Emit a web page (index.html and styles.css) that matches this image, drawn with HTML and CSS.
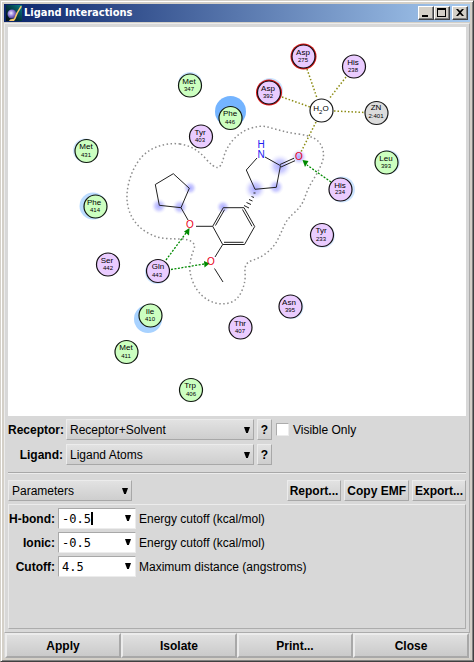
FILE: index.html
```html
<!DOCTYPE html>
<html lang="en">
<head>
<meta charset="utf-8">
<title>Ligand Interactions</title>
<link rel="stylesheet" href="styles.css">
</head>
<body>
<div class="window">
  <header class="titlebar">
    <svg class="app-icon" viewBox="0 0 16 16" aria-hidden="true">
      <defs>
        <linearGradient id="teal" x1="0" y1="1" x2="1" y2="0"><stop offset="0" stop-color="#020c10"/><stop offset=".45" stop-color="#04343c"/><stop offset="1" stop-color="#0a8088"/></linearGradient>
        <radialGradient id="orb" cx=".4" cy=".4" r=".6"><stop offset="0" stop-color="#f4f0ff"/><stop offset=".5" stop-color="#9a86dc"/><stop offset="1" stop-color="#4a3a96"/></radialGradient>
      </defs>
      <rect width="16" height="16" fill="url(#teal)"/>
      <circle cx="6" cy="9" r="4.5" fill="url(#orb)"/>
      <path d="M14.500 1L16 1.500L12 8L9.500 14L8 16H3L4 14.500L8 13.500L10 8.500Z" fill="#f8c86c"/>
    </svg>
    <h1 class="title">Ligand Interactions</h1>
    <div class="window-buttons">
      <button class="win-btn" aria-label="Minimize"><svg viewBox="0 0 12 10"><path d="M2 7h6v2H2z"/></svg></button>
      <button class="win-btn" aria-label="Maximize"><svg viewBox="0 0 12 10"><path fill-rule="evenodd" d="M1 0h9v9H1zM2 2v6h7V2z"/></svg></button>
      <button class="win-btn win-close" aria-label="Close window"><svg viewBox="0 0 12 10"><path d="M2 1h2l2 2 2-2h2L7 4.500 10 8H8L6 6 4 8H2l3-3.500z"/></svg></button>
    </div>
  </header>

  <main class="client">
    <svg class="diagram" viewBox="8 27 458 389" role="img" aria-label="Ligand interaction diagram">
      <defs>
        <radialGradient id="glow"><stop offset="0" stop-color="#a8a8ff"/><stop offset=".5" stop-color="#c8c8ff" stop-opacity=".85"/><stop offset="1" stop-color="#f0f0ff" stop-opacity="0"/></radialGradient>
      </defs>
      <g fill="url(#glow)">
        <circle cx="255" cy="189" r="11"/><circle cx="280" cy="166" r="12"/><circle cx="276" cy="187" r="8"/>
        <circle cx="299" cy="157" r="8"/><circle cx="190" cy="188" r="7"/><circle cx="180" cy="207" r="8"/>
        <circle cx="159" cy="206" r="8"/><circle cx="223" cy="207" r="7"/>
      </g>
      <path class="contour" d="M180 144Q173 143 165 144.500Q157 146 149.500 150.500Q142 155 136.500 164Q131 173 128.500 184Q126 195 127.500 204Q129 213 134 220.500Q139 228 148 233Q157 238 166 238.500Q175 239 181.500 239Q188 239 192 242Q196 245 193.500 250.500Q191 256 190 264Q189 272 192.500 281Q196 290 202 295.500Q208 301 215.500 303Q223 305 230.500 302.500Q238 300 242 290.500Q246 281 245 272Q244 263 252 260.500Q260 258 267 252.500Q274 247 277.500 240Q281 233 284 226Q287 219 294.500 212.500Q302 206 305 197Q308 188 313 180Q318 172 321.500 164Q325 156 322.500 148.500Q320 141 313.500 138Q307 135 298.500 134Q290 133 282.500 131Q275 129 267.500 127Q260 125 250 128.500Q240 132 233 140Q226 148 223.500 158Q221 168 217 167.500Q213 167 206.500 159.500Q200 152 193.500 148.500Q187 145 180 144Z"/>
      <g class="bond">
        <path d="M173.300 173.700L189.300 188.300L181 207.700L159.300 205.300L155.300 184.500Z"/>
        <path d="M181 207.700L188 220M196 226.300H212.700M222.700 244.500L215 257M214.500 268.500L223 282"/>
        <path d="M212.700 226.300L223.300 207.700H244L254.700 226.500L244.500 244.500H222.700Z"/>
        <path d="M215.500 225.500L224.500 209.700M242.500 209.500L252 226.300M243.500 242.300H224"/>
        <path d="M257 158L246.300 170L255 189.300L276.300 187.300L280.500 165.700L265 157"/>
        <path d="M280 164.500L294 158.200M281 167L295 160.700"/>
        <path d="M253.500 193h2M251.500 196.500l2.500 1M249 199.500l3.500 1.500M246.500 202.500l4.500 2M244 205.500l5 2.500"/>
      </g>
      <g class="water-link">
        <path d="M307 69L317 98M346 77L329 99M282 97L310 107M334 111L365 112.500M316 122L301 152"/>
      </g>
      <g class="hbond">
        <path d="M331 182L307 165M166 260L186 233M171 269.500L204 264"/>
      </g>
      <g fill="#008a00">
        <path d="M302.500 160L308.500 161L305 167Z"/><path d="M189.500 228L189 235.500L184 231.500Z"/><path d="M209.500 263.500L204.500 267.500L204 261Z"/>
      </g>
      <g class="atom">
        <text class="nitrogen" x="261" y="148">H</text><text class="nitrogen" x="261" y="158">N</text>
        <text class="oxygen" x="299" y="160">O</text><text class="oxygen" x="190" y="228">O</text><text class="oxygen" x="211" y="265">O</text>
      </g>
      <g>
        <circle cx="190" cy="84" r="12" fill="#c8e2ff"/><circle cx="230.500" cy="111.500" r="15.500" fill="#74b4ff"/>
        <circle cx="85" cy="150.500" r="12" fill="#d0e6ff"/><circle cx="93" cy="206" r="13.500" fill="#bcdcff"/>
        <circle cx="148" cy="319" r="14" fill="#a8d2ff"/><circle cx="270" cy="91" r="13" fill="#cce4ff"/>
        <circle cx="388" cy="162" r="12" fill="#d4e8ff"/><circle cx="342" cy="189.500" r="13" fill="#cce4ff"/>
        <circle cx="323" cy="236" r="12" fill="#dcecff"/><circle cx="291.500" cy="307" r="12" fill="#d4e8ff"/>
        <circle cx="157" cy="272" r="12" fill="#cce4ff"/>
      </g>
      <g class="greasy">
        <circle cx="190" cy="85.500" r="11.500"/><circle cx="230.500" cy="118" r="11.500"/><circle cx="86.500" cy="151" r="11.500"/>
        <circle cx="95.500" cy="206.500" r="11.500"/><circle cx="386.500" cy="162.500" r="11.500"/><circle cx="150.500" cy="315.500" r="11.500"/>
        <circle cx="126.500" cy="352" r="11.500"/><circle cx="191" cy="390" r="11.500"/>
      </g>
      <g class="polar">
        <circle cx="201" cy="136.500" r="11.500"/><circle cx="354" cy="66.500" r="11.500"/><circle cx="340.500" cy="189.500" r="11.500"/>
        <circle cx="322" cy="235" r="11.500"/><circle cx="290.500" cy="306.500" r="11.500"/><circle cx="158" cy="271" r="11.500"/>
        <circle cx="108" cy="264.500" r="11.500"/><circle cx="240.500" cy="327.500" r="11.500"/>
      </g>
      <g fill="#d81414"><circle cx="303.500" cy="56.500" r="13"/><circle cx="269" cy="92.500" r="13"/></g>
      <g class="polar"><circle cx="303.500" cy="56.500" r="11.500"/><circle cx="269" cy="92.500" r="11.500"/></g>
      <circle class="water" cx="321.500" cy="110.500" r="11.500"/>
      <circle class="metal" cx="376.500" cy="113" r="11.500"/>
      <g class="residue">
        <text x="303" y="55">Asp</text><text x="353" y="65">His</text><text x="268" y="91">Asp</text><text x="376" y="110">ZN</text>
        <text x="189" y="84">Met</text><text x="230" y="116">Phe</text><text x="200" y="135">Tyr</text><text x="86" y="149">Met</text>
        <text x="94" y="205">Phe</text><text x="386" y="161">Leu</text><text x="340" y="188">His</text><text x="321" y="233">Tyr</text>
        <text x="289" y="305">Asn</text><text x="158" y="269">Gln</text><text x="107" y="263">Ser</text><text x="150" y="314">Ile</text>
        <text x="240" y="326">Thr</text><text x="126" y="350">Met</text><text x="190" y="388">Trp</text>
        <text x="321" y="111">H<tspan class="sub" dy="3">2</tspan><tspan dy="-3">O</tspan></text>
      </g>
      <g class="number">
        <text x="303" y="62">275</text><text x="353" y="72">238</text><text x="268" y="98">392</text><text x="376" y="118">2:401</text>
        <text x="189" y="91">347</text><text x="230" y="124">446</text><text x="200" y="142">403</text><text x="86" y="157">431</text>
        <text x="95" y="212">414</text><text x="386" y="168">393</text><text x="340" y="194">234</text><text x="321" y="241">233</text>
        <text x="290" y="312">395</text><text x="157" y="277">443</text><text x="108" y="270">442</text><text x="150" y="321">410</text>
        <text x="240" y="333">407</text><text x="126" y="358">411</text><text x="191" y="396">406</text>
      </g>
    </svg>

    <div class="targets">
      <label for="receptor">Receptor:</label>
      <div class="drop"><select id="receptor"><option>Receptor+Solvent</option></select><svg class="arrow" viewBox="0 0 7 7"><path d="M0 0h7L4.500 7h-2z"/></svg></div>
      <button class="btn" aria-label="Receptor help">?</button>
      <label class="check"><input type="checkbox"> Visible Only</label>
      <label for="ligand">Ligand:</label>
      <div class="drop"><select id="ligand"><option>Ligand Atoms</option></select><svg class="arrow" viewBox="0 0 7 7"><path d="M0 0h7L4.500 7h-2z"/></svg></div>
      <button class="btn" aria-label="Ligand help">?</button>
    </div>

    <hr class="rule">

    <div class="toolbar">
      <div class="drop page-drop"><select aria-label="Page"><option>Parameters</option></select><svg class="arrow" viewBox="0 0 7 7"><path d="M0 0h7L4.500 7h-2z"/></svg></div>
      <button class="btn report">Report...</button>
      <button class="btn">Copy EMF</button>
      <button class="btn">Export...</button>
    </div>

    <section class="panel">
      <label for="hbond">H-bond:</label>
      <div class="combo"><input id="hbond" type="text" value="-0.5"><span class="caret"></span><svg class="arrow" viewBox="0 0 7 7"><path d="M0 0h7L4.500 7h-2z"/></svg></div>
      <span>Energy cutoff (kcal/mol)</span>
      <label for="ionic">Ionic:</label>
      <div class="combo"><input id="ionic" type="text" value="-0.5"><svg class="arrow" viewBox="0 0 7 7"><path d="M0 0h7L4.500 7h-2z"/></svg></div>
      <span>Energy cutoff (kcal/mol)</span>
      <label for="cutoff">Cutoff:</label>
      <div class="combo"><input id="cutoff" type="text" value="4.5"><svg class="arrow" viewBox="0 0 7 7"><path d="M0 0h7L4.500 7h-2z"/></svg></div>
      <span>Maximum distance (angstroms)</span>
    </section>
  </main>

  <footer class="actions">
    <button>Apply</button><button>Isolate</button><button>Print...</button><button>Close</button>
  </footer>
</div>
</body>
</html>
```
FILE: styles.css
```css
* { box-sizing: border-box; }

body {
  margin: 0;
  font: 12px/14px "Liberation Sans", Arial, sans-serif;
  color: #000;
}

button, select, input { font: inherit; color: inherit; margin: 0; }

.window {
  display: flex;
  flex-direction: column;
  min-height: 100vh;
  padding: 3px;
  background: #d4d0c8;
  border: 1px solid;
  border-color: #d4d0c8 #404040 #404040 #d4d0c8;
  box-shadow: inset 1px 1px #fff, inset -1px -1px #808080;
}

.titlebar {
  display: flex;
  align-items: center;
  height: 18px;
  padding: 0 2px;
  background: linear-gradient(90deg, #0a246a, #a6caf0);
}

.app-icon { width: 16px; height: 16px; }

.title {
  flex: 1;
  margin: 0 0 0 2px;
  font: bold 11px/16px "DejaVu Sans Condensed", "Noto Sans", sans-serif;
  color: #fff;
}

.window-buttons { display: flex; }

.win-btn {
  display: flex;
  width: 16px;
  height: 14px;
  padding: 1px;
  background: #d4d0c8;
  border: 1px solid;
  border-color: #fff #404040 #404040 #fff;
  box-shadow: inset -1px -1px #808080;
}

.win-btn svg { width: 12px; height: 10px; }
.win-close { margin-left: 2px; }

.client {
  flex: 1;
  display: flex;
  flex-direction: column;
  margin-top: 1px;
  padding: 3px;
  background: #d8d8d8;
  border: 1px solid;
  border-color: #ececec #acacac #acacac #ececec;
}

.diagram { display: block; width: 100%; height: auto; background: #fff; }

.contour { fill: none; stroke: #8c8c8c; stroke-width: 1.5; stroke-dasharray: 1.5 2.5; }
.bond { fill: none; stroke: #202020; stroke-width: 1; }
.water-link { fill: none; stroke: #8c8c14; stroke-width: 1.5; stroke-dasharray: 1.5 2; }
.hbond { fill: none; stroke: #008a00; stroke-width: 1.3; stroke-dasharray: 2 1.5; }
.greasy { fill: #ccffc0; stroke: #101810; stroke-width: 1.2; }
.polar { fill: #eaccff; stroke: #141014; stroke-width: 1.2; }
.water { fill: #fff; stroke: #181818; stroke-width: 1.2; }
.metal { fill: #dcdcdc; stroke: #181818; stroke-width: 1.2; }
.atom { font-size: 10px; text-anchor: middle; }
.nitrogen { fill: #2020f0; }
.oxygen { fill: #e80020; }
.residue { font-size: 8px; text-anchor: middle; }
.number { font-size: 6px; text-anchor: middle; }
.sub { font-size: 6px; }

label { font-weight: bold; text-align: right; }

.targets {
  display: grid;
  grid-template-columns: 55px 188px 15px 1fr;
  grid-auto-rows: 21px;
  align-items: center;
  gap: 4px 3px;
  padding: 3px 0 7px;
}

.check {
  display: flex;
  align-items: center;
  gap: 4px;
  padding-left: 1px;
  font-weight: normal;
}

.check input {
  appearance: none;
  width: 13px;
  height: 13px;
  background: #fff;
  border: 1px solid;
  border-color: #acacac #ececec #ececec #acacac;
}

.targets > :nth-child(5) { grid-column: 1; }

.drop { position: relative; height: 21px; }

.drop select, .btn {
  height: 21px;
  background: linear-gradient(#e2e2e2, #cecece);
  border: 1px solid;
  border-color: #ececec #a8a8a8 #a8a8a8 #ececec;
  border-radius: 0;
}

.drop select { appearance: none; display: block; width: 100%; padding: 0 16px 0 3px; }

.arrow {
  position: absolute;
  top: 8px;
  right: 4px;
  width: 6px;
  height: 6px;
  pointer-events: none;
}

.btn { padding: 0 2px; font-weight: bold; }

.rule {
  width: 100%;
  height: 2px;
  margin: 0;
  border: 0;
  border-top: 1px solid #a8a8a8;
  border-bottom: 1px solid #ececec;
}

.toolbar { display: flex; gap: 3px; padding: 6px 0 3px; }
.page-drop { width: 124px; }
.report { margin-left: auto; }

.panel {
  flex: 1;
  display: grid;
  grid-template-columns: 46px 78px 1fr;
  grid-auto-rows: 21px;
  align-content: start;
  align-items: center;
  gap: 3px;
  padding: 3px 0;
  border: 1px solid;
  border-color: #ececec #acacac #acacac #ececec;
}

.combo {
  position: relative;
  height: 21px;
  background: #fff;
  border: 1px solid;
  border-color: #a8a8a8 #ececec #ececec #a8a8a8;
  font: 12px/14px "DejaVu Sans Mono", monospace;
}

.combo input {
  display: block;
  width: 60px;
  height: 19px;
  padding: 0 0 0 3px;
  border: 0;
  outline: 0;
  background: none;
}

.combo .arrow { top: 6px; }

.caret {
  position: absolute;
  left: calc(4ch + 3px);
  top: 3px;
  width: 2px;
  height: 13px;
  background: #000;
}

.actions {
  display: grid;
  grid-template-columns: repeat(4, 1fr);
  padding: 0 1px;
  background: #d8d8d8;
}

.actions button {
  height: 25px;
  padding: 0;
  font-weight: bold;
  background: linear-gradient(#e0e0e0, #cacaca);
  border: 2px solid;
  border-color: #ececec #a8a8a8 #a8a8a8 #ececec;
}
```
